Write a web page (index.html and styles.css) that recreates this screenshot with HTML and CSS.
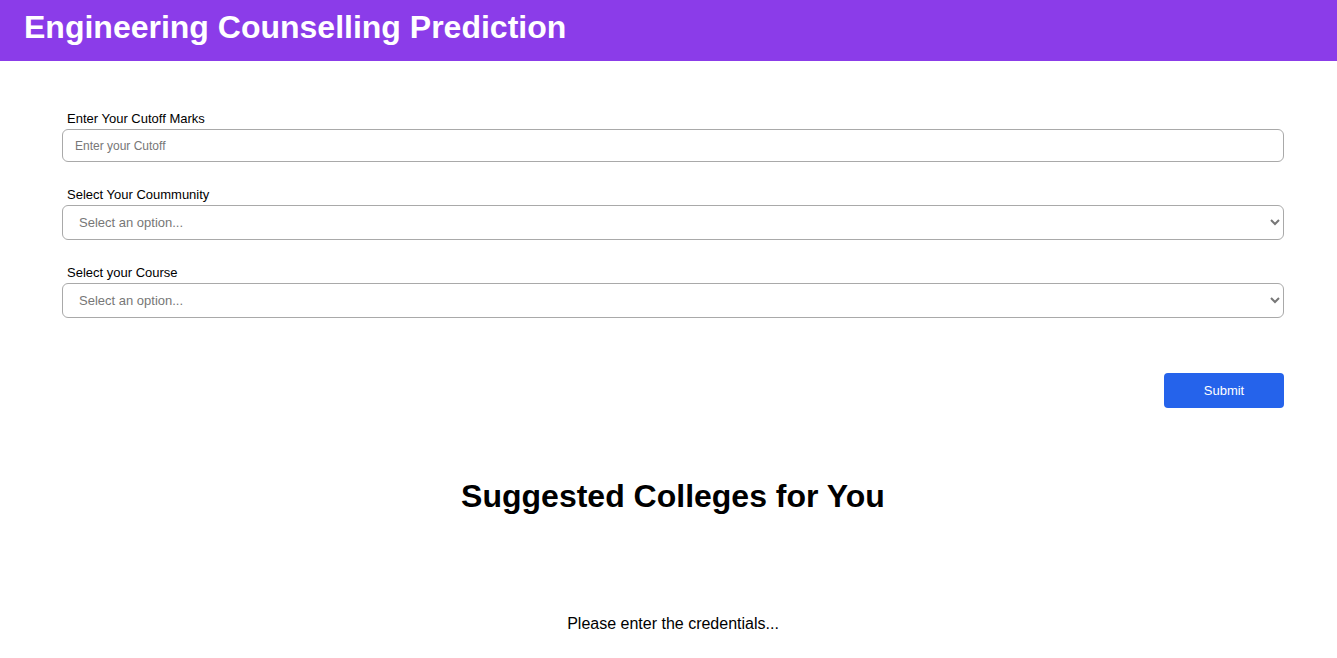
FILE: index.html
```html
<!DOCTYPE html>
<html>
<head>
<meta charset="utf-8">
<link rel="stylesheet" href="styles.css">
</head>
<body>
<header class="topbar">
  <h1 class="title">Engineering Counselling Prediction</h1>
</header>
<main class="container">
  <form class="form">
    <div class="field">
      <label class="label">Enter Your Cutoff Marks</label>
      <input class="input" type="text" placeholder="Enter your Cutoff">
    </div>
    <div class="field">
      <label class="label">Select Your Coummunity</label>
      <select class="select"><option>Select an option...</option></select>
    </div>
    <div class="field">
      <label class="label">Select your Course</label>
      <select class="select"><option>Select an option...</option></select>
    </div>
    <div class="actions">
      <button class="submit" type="button">Submit</button>
    </div>
  </form>
  <h2 class="results-title">Suggested Colleges for You</h2>
  <p class="empty">Please enter the credentials...</p>
</main>
</body>
</html>
```
FILE: styles.css
```css
* { box-sizing: border-box; }
body {
  margin: 0;
  font-family: "Liberation Sans", Arial, sans-serif;
  color: #000;
  background: #fff;
}
.topbar {
  background: #8b3ce9;
  height: 61px;
  display: flex;
  align-items: center;
  padding-left: 24px;
}
.title {
  margin: 0;
  color: #fff;
  font-family: "Liberation Sans", Arial, sans-serif;
  font-weight: bold;
  font-size: 32px;
  line-height: 1;
  position: relative;
  top: -4px;
}
.container {
  margin-left: 62px;
  width: 1222px;
}
.form {
  padding-top: 50px;
  display: flex;
  flex-direction: column;
}
.field {
  display: flex;
  flex-direction: column;
  margin-bottom: 25px;
}
.label {
  font-size: 13px;
  line-height: 15px;
  margin-left: 5px;
  margin-bottom: 3px;
}
.input {
  height: 33px;
  border: 1px solid #a9a9a9;
  border-radius: 6px;
  padding: 0 12px;
  font-family: "Liberation Sans", Arial, sans-serif;
  font-size: 12px;
}
.input::placeholder { color: #777; }
.select {
  height: 35px;
  border: 1px solid #a9a9a9;
  border-radius: 6px;
  padding: 0 12px;
  background: #fff;
  color: #777;
  font-family: "Liberation Sans", Arial, sans-serif;
  font-size: 13px;
}
.actions {
  display: flex;
  justify-content: flex-end;
  margin-top: 30px;
}
.submit {
  width: 120px;
  height: 35px;
  background: #2563eb;
  color: #fff;
  border: none;
  border-radius: 4px;
  font-family: "Liberation Sans", Arial, sans-serif;
  font-size: 13px;
}
.results-title {
  text-align: center;
  font-size: 32px;
  font-weight: bold;
  margin: 70px 0 0 0;
  line-height: 37px;
}
.empty {
  text-align: center;
  font-size: 16px;
  margin: 100px 0 0 0;
  line-height: 18px;
}
```
